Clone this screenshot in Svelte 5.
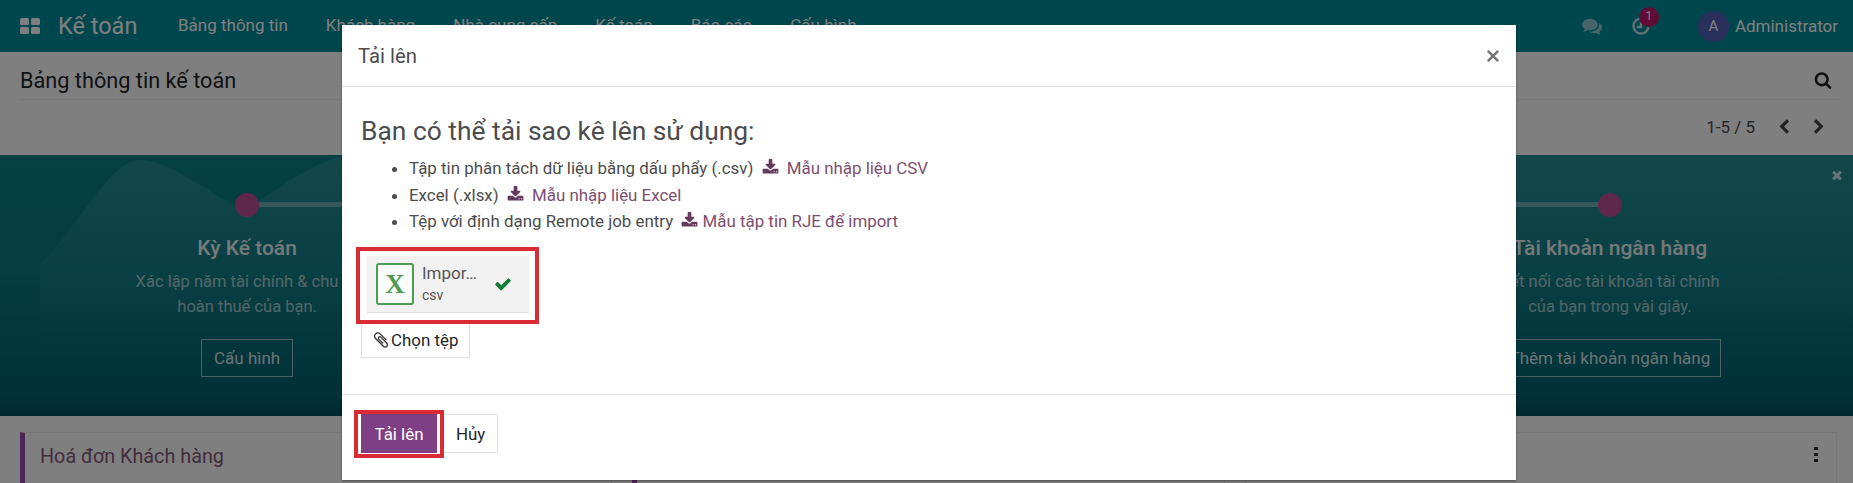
<script>
  const navItems = ['Bảng thông tin', 'Khách hàng', 'Nhà cung cấp', 'Kế toán', 'Báo cáo', 'Cấu hình'];

  const steps = [
    { title: 'Kỳ Kế toán', lines: ['Xác lập năm tài chính & chu kỳ', 'hoàn thuế của bạn.'], action: 'Cấu hình' },
    { title: 'Thuế', lines: ['Thiết lập thuế mặc định', 'cho công ty của bạn.'], action: 'Cấu hình' },
    { title: 'Hoá đơn', lines: ['Tạo hoá đơn đầu tiên', 'cho khách hàng.'], action: 'Tạo' },
    { title: 'Tài khoản ngân hàng', lines: ['Kết nối các tài khoản tài chính', 'của bạn trong vài giây.'], action: 'Thêm tài khoản ngân hàng' }
  ];

  const download = 'M1344 1344q0-26-19-45t-45-19-45 19-19 45 19 45 45 19 45-19 19-45zm256 0q0-26-19-45t-45-19-45 19-19 45 19 45 45 19 45-19 19-45zm128-224v320q0 40-28 68t-68 28h-1472q-40 0-68-28t-28-68v-320q0-40 28-68t68-28h465l135 136q58 56 136 56t136-56l136-136h464q40 0 68 28t28 68zm-325-569q17 41-14 70l-448 448q-18 19-45 19t-45-19l-448-448q-31-29-14-70 17-39 59-39h256v-448q0-26 19-45t45-19h256q26 0 45 19t19 45v448h256q42 0 59 39z';

  const formats = [
    { text: 'Tập tin phân tách dữ liệu bằng dấu phẩy (.csv)', link: 'Mẫu nhập liệu CSV', gap: true },
    { text: 'Excel (.xlsx)', link: 'Mẫu nhập liệu Excel', gap: true },
    { text: 'Tệp với định dạng Remote job entry', link: 'Mẫu tập tin RJE để import', gap: false }
  ];
</script>

<div class="page">
  <header class="navbar">
    <svg class="apps" viewBox="0 0 20 16" aria-hidden="true">
      <rect x="0" y="0" width="9" height="7" rx="1.5" />
      <rect x="11" y="0" width="9" height="7" rx="1.5" />
      <rect x="0" y="9" width="9" height="7" rx="1.5" />
      <rect x="11" y="9" width="9" height="7" rx="1.5" />
    </svg>
    <span class="brand">Kế toán</span>
    <nav class="menu">
      {#each navItems as item}
        <span>{item}</span>
      {/each}
    </nav>
    <div class="systray">
      <svg class="chat" viewBox="0 0 1792 1792" aria-hidden="true"><path d="M1408 768q0 139-94 257t-256.5 186.5-353.5 68.5q-86 0-176-16-124 88-278 128-36 9-86 16h-3q-11 0-20.5-8t-11.5-21q-1-3-1-6.5t.5-6.5 2-6l2.5-5 3.5-5.5 4-5 4.5-5 4-4.5q5-6 23-25t26-29.5 22.5-29 25-38.5 20.5-44q-124-72-195-177t-71-224q0-139 94-257t256.5-186.5 353.5-68.5 353.5 68.5 256.5 186.5 94 257zm384 256q0 120-71 224.5t-195 176.5q10 24 20.5 44t25 38.5 22.5 29 26 29.5 23 25q1 1 4 4.5t4.5 5 4 5 3.5 5.5l2.5 5 2 6 .5 6.5-1 6.5q-3 14-13 22t-22 7q-50-7-86-16-154-40-278-128-90 16-176 16-271 0-472-132 58 4 88 4 161 0 309-45t264-129q125-92 192-212t67-254q0-77-23-152 129 71 204 178t75 230z" /></svg>
      <span class="activity">
        <svg viewBox="0 0 20 20" aria-hidden="true">
          <circle cx="10" cy="10" r="7.5" />
          <path d="M10 5.5V11H6" />
        </svg>
        <b class="badge">1</b>
      </span>
      <span class="user">
        <i class="avatar">A</i>
        Administrator
      </span>
    </div>
  </header>

  <section class="control">
    <div class="control-top">
      <h1>Bảng thông tin kế toán</h1>
      <svg class="search" viewBox="0 0 1792 1792" aria-hidden="true"><path d="M1216 832q0-185-131.5-316.5t-316.5-131.5-316.5 131.5-131.5 316.5 131.5 316.5 316.5 131.5 316.5-131.5 131.5-316.5zm512 832q0 52-38 90t-90 38q-54 0-90-38l-343-342q-179 124-399 124-143 0-273.5-55.5t-225-150-150-225-55.5-273.5 55.5-273.5 150-225 225-150 273.5-55.5 273.5 55.5 225 150 150 225 55.5 273.5q0 220-124 399l343 343q37 37 37 90z" /></svg>
    </div>
    <div class="control-bottom">
      <span class="pager">1-5 / 5</span>
      <svg class="chev" viewBox="0 0 1792 1792" aria-hidden="true"><path d="M1427 301l-531 531 531 531q19 19 19 45t-19 45l-166 166q-19 19-45 19t-45-19l-742-742q-19-19-19-45t19-45l742-742q19-19 45-19t45 19l166 166q19 19 19 45t-19 45z" /></svg>
      <svg class="chev" viewBox="0 0 1792 1792" aria-hidden="true"><path d="M1363 877l-742 742q-19 19-45 19t-45-19l-166-166q-19-19-19-45t19-45l531-531-531-531q-19-19-19-45t19-45l166-166q19-19 45-19t45 19l742 742q19 19 19 45t-19 45z" /></svg>
    </div>
  </section>

  <section class="banner">
    <svg class="hills" viewBox="0 0 1853 261" preserveAspectRatio="none" aria-hidden="true">
      <defs>
        <linearGradient id="hillFade" x1="0" y1="0" x2="0" y2="1">
          <stop offset="0" stop-color="#fff" stop-opacity="0.11" />
          <stop offset="0.75" stop-color="#fff" stop-opacity="0" />
        </linearGradient>
      </defs>
      <path fill="url(#hillFade)" d="M40 110C80 70 110 5 140 5c30 0 70 35 105 50 40-25 70-50 105-55h1503v261H40z" />
    </svg>
    <svg class="banner-close" viewBox="0 0 1792 1792" aria-hidden="true"><path d="M1490 1322q0 40-28 68l-136 136q-28 28-68 28t-68-28l-294-294-294 294q-28 28-68 28t-68-28l-136-136q-28-28-28-68t28-68l294-294-294-294q-28-28-28-68t28-68l136-136q28-28 68-28t68 28l294 294 294-294q28-28 68-28t68 28l136 136q28 28 28 68t-28 68l-294 294 294 294q28 28 28 68z" /></svg>
    {#each steps as step}
      <div class="step">
        <span class="dot"></span>
        <h3>{step.title}</h3>
        {#each step.lines as line}
          <p>{line}</p>
        {/each}
        <span class="outline-btn">{step.action}</span>
      </div>
    {/each}
  </section>

  <section class="content">
    <div class="journal sale">
      <span>Hoá đơn Khách hàng</span>
    </div>
    <div class="journal sale">
      <span>Hoá đơn Nhà cung cấp</span>
    </div>
    <div class="journal">
      <span>Ngân hàng</span>
      <i class="kebab"><b></b><b></b><b></b></i>
    </div>
  </section>

  <div class="backdrop">
    <div class="modal">
      <div class="modal-head">
        <span>Tải lên</span>
        <svg class="close" viewBox="0 0 14 14" aria-hidden="true"><path d="M2.5 2.5l9 9M11.5 2.5l-9 9" /></svg>
      </div>
      <div class="modal-body">
        <h2>Bạn có thể tải sao kê lên sử dụng:</h2>
        <ul>
          {#each formats as f}
            <li>
              {f.text}
              <a href="#top" class="link" class:tight={!f.gap}>
                <svg viewBox="0 0 1792 1792" aria-hidden="true"><path d={download} /></svg>
                {f.link}
              </a>
            </li>
          {/each}
        </ul>
        <div class="attachment-wrap">
          <div class="attachment">
            <span class="xls">X</span>
            <span class="file">
              <span class="name">Impor…</span>
              <small>csv</small>
            </span>
            <svg class="ok" viewBox="0 0 1792 1792" aria-hidden="true"><path d="M1671 566q0 40-28 68l-724 724-136 136q-28 28-68 28t-68-28l-136-136-362-362q-28-28-28-68t28-68l136-136q28-28 68-28t68 28l294 295 656-657q28-28 68-28t68 28l136 136q28 28 28 68z" /></svg>
          </div>
          <span class="mark mark-file"></span>
        </div>
        <button class="btn pick">
          <svg viewBox="0 0 1792 1792" aria-hidden="true"><path d="M1596 1385q0 117-79 196t-196 79q-135 0-235-100l-777-776q-113-115-113-271 0-159 110-270t269-111q158 0 273 113l605 606q10 10 10 22 0 16-30.5 46.5t-46.5 30.5q-13 0-23-10l-606-607q-79-77-181-77-106 0-179 75t-73 181q0 105 76 181l776 777q63 63 145 63 64 0 106-42t42-106q0-82-63-145l-581-581q-26-24-60-24-29 0-48 19t-19 48q0 32 25 59l410 410q10 10 10 22 0 16-31 47t-47 31q-12 0-22-10l-410-410q-63-61-63-149 0-82 57-139t139-57q88 0 149 63l581 581q100 98 100 235z" /></svg>
          Chọn tệp
        </button>
      </div>
      <div class="modal-foot">
        <span class="primary-wrap">
          <button class="btn primary">Tải lên</button>
          <span class="mark mark-btn"></span>
        </span>
        <button class="btn cancel">Hủy</button>
      </div>
    </div>
  </div>
</div>

<style>
  :global(body) {
    margin: 0;
    background: #fff;
  }
  .page {
    position: relative;
    width: 1853px;
    height: 483px;
    overflow: hidden;
    background: #fff;
    font-family: Roboto, "Noto Sans", sans-serif;
    color: #212529;
  }

  .navbar {
    height: 52px;
    display: flex;
    align-items: center;
    padding: 0 15px 0 20px;
    background: #008c9a;
    color: #fff;
    box-sizing: border-box;
  }
  .apps { width: 20px; height: 16px; fill: #fff; margin-right: 18px; }
  .brand { font-size: 23.5px; width: 120px; }
  .menu { display: flex; gap: 38px; font-size: 17px; padding-bottom: 2px; }
  .systray { margin-left: auto; display: flex; align-items: center; font-size: 17px; }
  .chat { width: 20px; height: 20px; fill: #fff; margin-right: 29px; opacity: 0.55; }
  .activity { position: relative; width: 20px; height: 20px; margin-right: 47px; }
  .activity svg { width: 20px; height: 20px; fill: none; stroke: #fff; stroke-width: 2.4; opacity: 0.75; }
  .badge {
    position: absolute; left: 8px; top: -9px;
    width: 20px; height: 20px; border-radius: 50%;
    background: #c0186e; font-size: 12px; font-weight: 400;
    text-align: center; line-height: 19px;
  }
  .user { display: flex; align-items: center; gap: 6px; }
  .avatar {
    width: 31px; height: 31px; border-radius: 50%;
    background: #5360b8; text-align: center; line-height: 31px; font-style: normal;
    font-size: 15px;
  }

  .control {
    height: 103px;
    padding: 0 13px 0 20px;
    box-sizing: border-box;
    background: #fff;
  }
  .control-top {
    height: 47px;
    display: flex; align-items: center; justify-content: space-between;
    border-bottom: 1px solid #eee;
    padding-right: 8px;
  }
  h1 { margin: 0; font-size: 21.7px; font-weight: 400; color: #212529; padding-top: 9px; }
  .search { width: 18px; height: 18px; fill: #212529; padding-top: 9px; }
  .control-bottom {
    height: 54px;
    display: flex; align-items: center; justify-content: flex-end;
    gap: 19px;
    color: #4c4c4c;
    padding-right: 13px;
  }
  .pager { font-size: 17px; margin-right: 2px; }
  .chev { width: 16px; height: 16px; fill: #444; }

  .banner {
    position: relative;
    height: 261px;
    display: flex;
    padding: 0 16px 0 20px;
    box-sizing: border-box;
    overflow: hidden;
    background: linear-gradient(180deg, #0a8088 0%, #087a84 45%, #026272 92%, #005060 100%);
    color: #fff;
  }
  .hills { position: absolute; inset: 0; width: 100%; height: 100%; }
  .banner-close { position: absolute; right: 9px; top: 13px; width: 14px; height: 14px; fill: #fff; opacity: 0.8; }
  .step {
    position: relative;
    flex: 1;
    display: flex; flex-direction: column; align-items: center;
    text-align: center;
    padding-top: 38px;
  }
  .step + .step::before, .step:not(:last-of-type)::after {
    content: '';
    position: absolute;
    top: 47px;
    height: 5px;
    background: rgba(255, 255, 255, 0.35);
  }
  .step:not(:last-of-type)::after { left: 50%; right: 0; }
  .step + .step::before { left: 0; right: 50%; }
  .dot { position: relative; z-index: 1; width: 24px; height: 24px; border-radius: 50%; background: #c04f9a; }
  h3 { margin: 18px 0 8px; font-size: 21px; font-weight: 500; line-height: 26px; opacity: 0.9; }
  .step p { margin: 0; font-size: 16.5px; line-height: 25px; opacity: 0.62; }
  .outline-btn {
    margin-top: 20px;
    padding: 0 10px;
    height: 36px; line-height: 36px;
    min-width: 70px;
    border: 1px solid rgba(255, 255, 255, 0.6);
    font-size: 17px;
    color: rgba(255, 255, 255, 0.85);
  }

  .content {
    height: 67px;
    padding: 16px 16px 0 20px;
    box-sizing: border-box;
    display: grid;
    grid-template-columns: repeat(3, 1fr);
    gap: 20px;
  }
  .journal {
    height: 80px;
    box-sizing: border-box;
    display: flex; justify-content: space-between;
    padding: 12px 18px 0 15px;
    border: 1px solid #eee;
    font-size: 19.8px;
    color: #875a7b;
  }
  .journal.sale { border-left: 5px solid #9a4fb0; }
  .kebab { display: flex; flex-direction: column; gap: 3px; padding-top: 2px; }
  .kebab b { width: 4px; height: 3px; background: #333; }

  .backdrop {
    position: absolute; inset: 0;
    z-index: 5;
    padding: 25px 0 0 342px;
    box-sizing: border-box;
    background: rgba(0, 0, 0, 0.5);
  }
  .modal {
    width: 1174px;
    height: 455px;
    background: #fff;
    display: flex; flex-direction: column;
    font-size: 16.9px;
    box-shadow: 0 1px 2px rgba(0, 0, 0, 0.4);
  }
  .modal-head {
    height: 62px;
    box-sizing: border-box;
    flex: none;
    display: flex; align-items: center; justify-content: space-between;
    padding: 0 15px 0 16px;
    border-bottom: 1px solid #dee2e6;
    font-size: 20.3px;
    color: #4c4c4c;
  }
  .close { width: 16px; height: 16px; fill: none; stroke: #777; stroke-width: 2.4; }
  .modal-body { flex: 1; padding: 27px 19px 0; }
  h2 {
    margin: 0 0 7px;
    font-size: 26.4px; font-weight: 400; line-height: 34px;
    color: #4c4c4c;
  }
  ul { margin: 0; padding: 0 0 0 48px; color: #4c4c4c; }
  li { height: 26.5px; line-height: 26.5px; }
  .link { color: #7c4f70; text-decoration: none; margin-left: 4px; }
  .link svg { width: 17px; height: 17px; fill: #643a5c; vertical-align: -2px; margin-right: 4px; }
  .link.tight svg { margin-right: 0; }
  .attachment-wrap { position: relative; margin: 21px 0 0 6px; width: 162px; }
  .attachment {
    height: 57px;
    box-sizing: border-box;
    display: flex; align-items: center;
    padding: 0 9px;
    background: #f1f1f1;
    border-bottom: 1px solid #ddd;
  }
  .xls {
    width: 38px; height: 42px;
    box-sizing: border-box;
    flex: none;
    border: 2px solid #4f9a55;
    border-radius: 3px;
    background: #fbfdfb;
    text-align: center;
    font: bold 27px/38px "Liberation Serif", serif;
    color: #4f9a55;
  }
  .file { display: flex; flex-direction: column; margin-left: 8px; width: 64px; color: #555; }
  .name { font-size: 17px; line-height: 22px; }
  small { font-size: 14px; line-height: 22px; }
  .ok { width: 18px; height: 18px; fill: #0f7a35; margin-left: 8px; }
  .mark { position: absolute; border: 4px solid #d92b33; pointer-events: none; box-sizing: border-box; }
  .mark-file { left: -11px; right: -10px; top: -9px; bottom: -11px; }
  .btn {
    height: 39px;
    padding: 0 11px;
    background: #fff;
    border: 1px solid #dee2e6;
    font: inherit;
    color: #212529;
  }
  .pick { display: inline-flex; align-items: center; gap: 1px; height: 35px; margin-top: 10px; padding: 0 11px 0 10px; }
  .pick svg { width: 18px; height: 18px; fill: #333; }
  .modal-foot {
    height: 86px;
    box-sizing: border-box;
    flex: none;
    display: flex; align-items: flex-start; gap: 0;
    padding: 19px 19px 0;
    border-top: 1px solid #dee2e6;
  }
  .primary-wrap { position: relative; display: block; }
  .primary { background: #7f3f84; border-color: #7f3f84; color: #fff; width: 76px; padding: 0; }
  .cancel { margin-left: 6px; padding: 0 12px; }
  .mark-btn { left: -7px; right: -7px; top: -4px; bottom: -5px; }
</style>
